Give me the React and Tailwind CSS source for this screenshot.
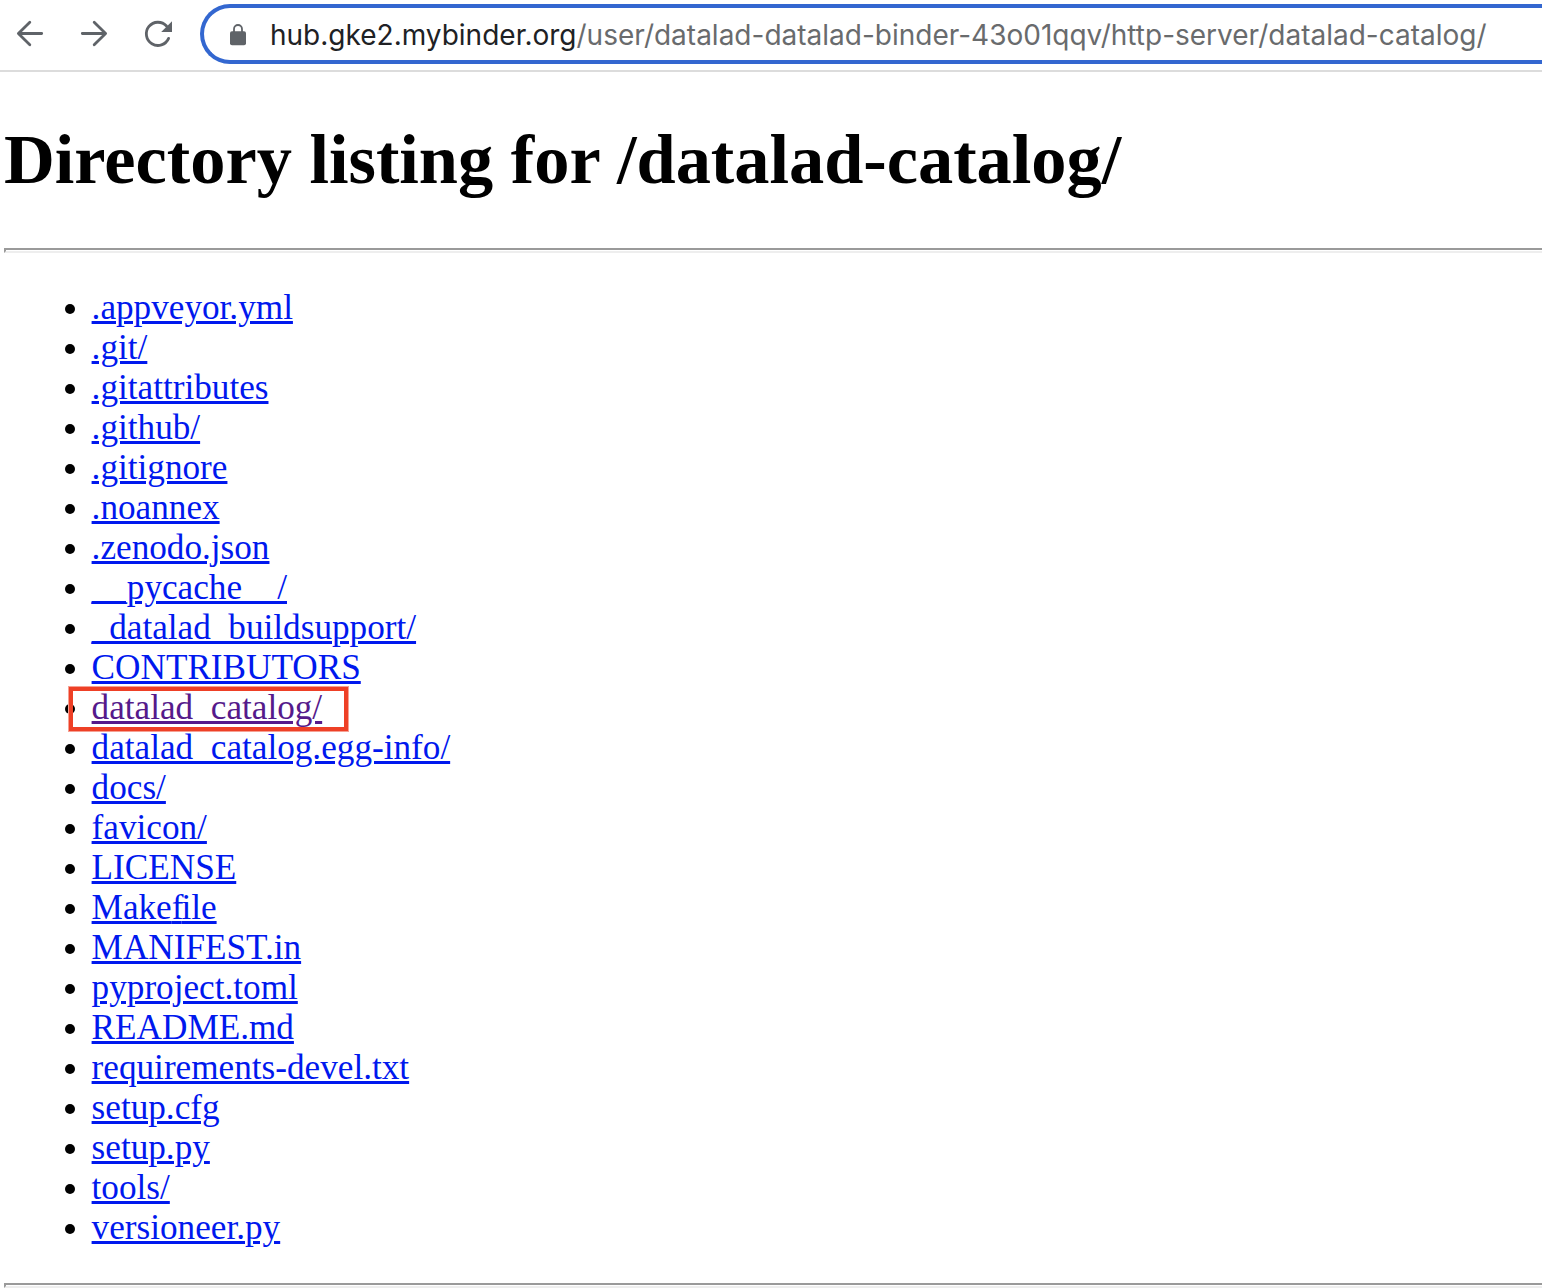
import React from "react";

const files = [
  ".appveyor.yml",
  ".git/",
  ".gitattributes",
  ".github/",
  ".gitignore",
  ".noannex",
  ".zenodo.json",
  "__pycache__/",
  "_datalad_buildsupport/",
  "CONTRIBUTORS",
  "datalad_catalog/",
  "datalad_catalog.egg-info/",
  "docs/",
  "favicon/",
  "LICENSE",
  "Makefile",
  "MANIFEST.in",
  "pyproject.toml",
  "README.md",
  "requirements-devel.txt",
  "setup.cfg",
  "setup.py",
  "tools/",
  "versioneer.py",
];

function Toolbar() {
  return (
    <header className="flex h-[72px] border-b-2 border-[#dcdcdc] pt-1">
      <svg
        className="h-16 w-[200px] shrink-0"
        viewBox="0 4 200 64"
        fill="none"
        stroke="#5f6368"
        strokeWidth="2.8"
        strokeLinecap="round"
        strokeLinejoin="round"
      >
        <path d="M41.7 33.5H18.5M29.8 22.2L18.4 33.5L29.8 44.7" />
        <path d="M82.3 33.5H105.5M94.2 22.2L105.6 33.5L94.2 44.7" />
        <path d="M166.5 26A11.6 11.6 0 1 0 168.6 38.4" />
        <path d="M172 21.2V32H161.2Z" fill="#5f6368" stroke="none" />
      </svg>
      <div className="flex h-[60px] flex-1 items-center rounded-l-full border-4 border-r-0 border-[#3367d0] bg-white pl-[26px]">
        <svg className="mt-px h-[22px] w-4 shrink-0" viewBox="0 0 16 22">
          <path d="M4 8V5A4 4 0 0 1 12 5V8" fill="none" stroke="#5f6368" strokeWidth="1.8" />
          <rect y="7.2" width="16" height="14" rx="2" fill="#5f6368" />
        </svg>
        <div className="ml-6 whitespace-nowrap pt-0.5 font-['Inter',sans-serif] text-[28px] leading-[36px] text-[#696b6d]">
          <span className="text-[#202124]">hub.gke2.mybinder.org</span>
          <span>/user/datalad-datalad-binder-43o01qqv/http-server/datalad-catalog/</span>
        </div>
      </div>
    </header>
  );
}

function Rule() {
  return <div className="h-[5px] border-b-2 border-l-2 border-t-2 border-b-[#eeeeee] border-l-[#9a9a9a] border-t-[#9a9a9a]" />;
}

function FileName({ name }) {
  if (name !== "Makefile") return name;
  return (
    <>
      Make<span className="tracking-[-2px]">f</span>ile
    </>
  );
}

export default function App() {
  return (
    <div className="h-[1288px] w-[1542px] overflow-hidden bg-white font-['Liberation_Serif',serif] text-black">
      <Toolbar />
      <main className="pl-1">
        <h1 className="h-[176px] whitespace-nowrap pt-[47px] text-[70.4px] font-bold leading-[80px] tracking-[-0.01px]">
          Directory listing for /datalad-catalog/
        </h1>
        <Rule />
        <ul className="mb-[35px] mt-[35px] text-[35.2px] leading-[40px]">
          {files.map((name) => (
            <li key={name} className="relative flex h-10 items-center pl-[61px]">
              <span className="mt-0.5 size-2.5 shrink-0 rounded-full bg-black" />
              <a
                className={
                  name === "datalad_catalog/"
                    ? "ml-[16.6px] text-[#551a8b] underline decoration-[2.6px] underline-offset-[2px]"
                    : "ml-[16.6px] text-[#0018ee] underline decoration-[2.6px] underline-offset-[2px]"
                }
              >
                <FileName name={name} />
              </a>
              {name === "datalad_catalog/" && (
                <span className="absolute left-[65px] top-[-1px] h-[44px] w-[279px] border-4 border-[#ee4026] shadow-[0_0_0_1px_#f6a093]" />
              )}
            </li>
          ))}
        </ul>
        <Rule />
      </main>
    </div>
  );
}
